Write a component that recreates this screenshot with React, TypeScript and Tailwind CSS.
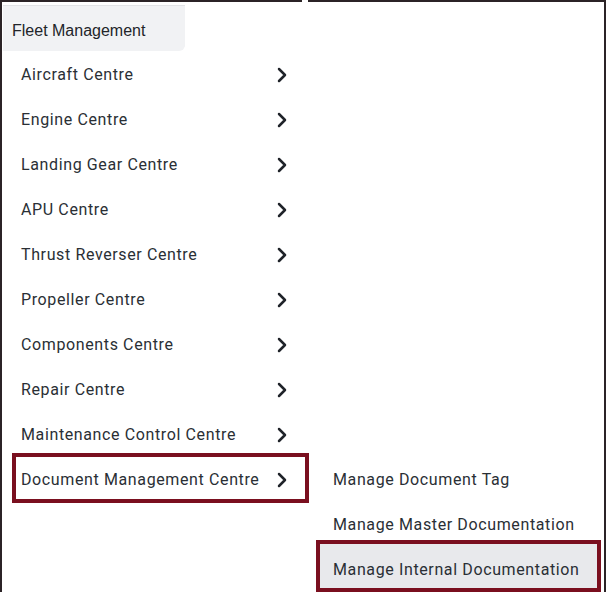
import React from "react";
import { ChevronRight } from "lucide-react";

const items = [
  "Aircraft Centre",
  "Engine Centre",
  "Landing Gear Centre",
  "APU Centre",
  "Thrust Reverser Centre",
  "Propeller Centre",
  "Components Centre",
  "Repair Centre",
  "Maintenance Control Centre",
  "Document Management Centre",
];

const sub = [
  "Manage Document Tag",
  "Manage Master Documentation",
  "Manage Internal Documentation",
];

export default function App() {
  return (
    <div className="w-[607px] h-[592px] bg-white overflow-hidden relative">
      <div className="w-[606px] h-[592px] border-t-2 border-l-2 border-r-2 border-[#2b2326] relative">
        <div className="absolute top-[-2px] left-[300px] w-[6px] h-[3px] bg-white" />
        <div className="flex">
          <div className="mt-[4px] ml-[1px] w-[182px] h-[45px] bg-[#f1f2f4] rounded-br-[6px] shadow-[0_-1px_0_#e2e3e6] flex items-center pl-[9px] pt-[4px] text-[16px] text-[#222529] font-['Liberation_Sans',Arial,sans-serif]">
            Fleet Management
          </div>
        </div>
        <div className="flex font-['Roboto',sans-serif] text-[16px] text-[#2a2f35] tracking-[0.62px] pt-[1px]">
          <div className="w-[314px] flex flex-col">
            {items.map((it, i) => {
              const sel = i === items.length - 1;
              return (
                <div key={it} className="relative h-[45px] flex items-center pl-[19px]">
                  {sel && (
                    <div className="absolute top-[-4px] left-[10px] w-[297px] h-[50px] border-[4px] border-[#7a0f1f]" />
                  )}
                  <span className="relative w-[249px]">{it}</span>
                  <ChevronRight className="relative" size={24} strokeWidth={2.5} color="#1f2329" />
                </div>
              );
            })}
          </div>
          <div className="flex flex-col pt-[405px]">
            {sub.map((s, i) => {
              const sel = i === sub.length - 1;
              return (
                <div key={s} className="relative h-[45px] flex items-center pl-[17px]">
                  {sel && (
                    <div className="absolute top-[-7px] left-[0px] w-[285px] h-[52px] border-[4px] border-[#7a0f1f] bg-[#e8e9ec]" />
                  )}
                  <span className="relative whitespace-nowrap">{s}</span>
                </div>
              );
            })}
          </div>
        </div>
      </div>
    </div>
  );
}
